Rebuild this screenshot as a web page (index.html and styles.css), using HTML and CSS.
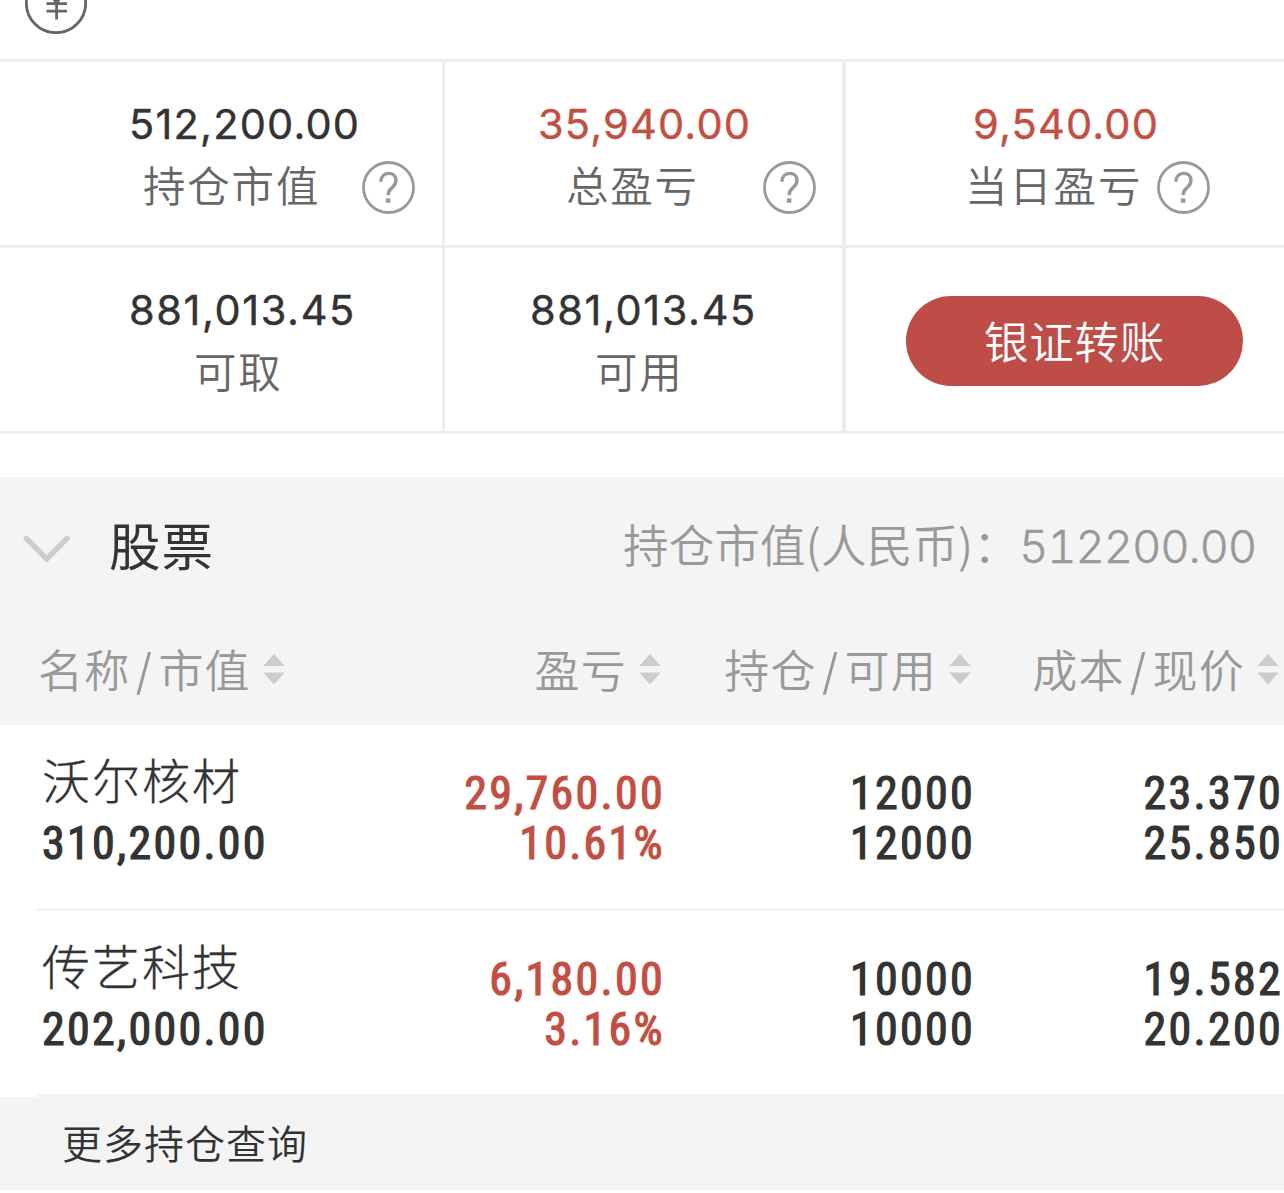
FILE: index.html
```html
<!DOCTYPE html>
<html lang="zh-CN">
<head>
<meta charset="utf-8">
<title>持仓</title>
<link rel="stylesheet" href="styles.css">
</head>
<body>
<svg class="defs" width="0" height="0" aria-hidden="true">
  <symbol id="help" viewBox="0 0 53 53">
    <circle cx="26.5" cy="26.5" r="25" fill="none" stroke="#999" stroke-width="2.8"/>
    <path d="M18.9 20.8C19 15.4 22.2 12.4 26.5 12.4C31 12.4 34 15.2 34 19.4C34 22.6 32.4 24.4 30.2 26.4C27.6 28.7 26.2 30 26.2 34" fill="none" stroke="#999" stroke-width="3.4"/>
    <path d="M23.8 37.4h4.6v4.4h-4.6z" fill="#999"/>
  </symbol>
  <symbol id="sort" viewBox="0 0 22 31">
    <path d="M11 0L21.7 12H.3zM.3 18.4H21.7L11 30.6z" fill="#ccc"/>
  </symbol>
</svg>
<header class="top">
  <svg class="yen" width="62" height="34" viewBox="0 0 62 34">
    <circle cx="31" cy="3" r="29.7" fill="none" stroke="#666" stroke-width="2.8"/>
    <path d="M31.6 0V19.5M21.5 3.6H42M21.5 11.2H42M22.5 -10L31.6 3L40.5 -10" fill="none" stroke="#666" stroke-width="2.8"/>
  </svg>
</header>
<main>
  <section class="summary">
    <div class="cell c1">
      <div class="num">512,200.00</div>
      <div class="label-row"><span class="label">持仓市值</span><svg class="help"><use href="#help"/></svg></div>
    </div>
    <div class="cell c2">
      <div class="num red">35,940.00</div>
      <div class="label-row"><span class="label">总盈亏</span><svg class="help"><use href="#help"/></svg></div>
    </div>
    <div class="cell c3">
      <div class="num red">9,540.00</div>
      <div class="label-row"><span class="label">当日盈亏</span><svg class="help"><use href="#help"/></svg></div>
    </div>
    <div class="cell c4">
      <div class="num">881,013.45</div>
      <div class="label-row"><span class="label">可取</span></div>
    </div>
    <div class="cell c5">
      <div class="num">881,013.45</div>
      <div class="label-row"><span class="label">可用</span></div>
    </div>
    <div class="cell c6"><button class="transfer">银证转账</button></div>
  </section>

  <section class="holdings">
    <div class="title-bar">
      <svg class="chevron" width="48" height="28" viewBox="0 0 48 28"><path d="M3.2 3.4L23.7 24L44 3.4" fill="none" stroke="#ccc" stroke-width="5.4" stroke-linecap="round"/></svg>
      <h2 class="title">股票</h2>
      <div class="total">持仓市值(人民币)：<span class="total-num">512200.00</span></div>
    </div>
    <div class="grid head">
      <div class="th">名称<i class="slash">/</i>市值<svg class="sort"><use href="#sort"/></svg></div>
      <div class="th">盈亏<svg class="sort"><use href="#sort"/></svg></div>
      <div class="th">持仓<i class="slash">/</i>可用<svg class="sort"><use href="#sort"/></svg></div>
      <div class="th">成本<i class="slash">/</i>现价<svg class="sort"><use href="#sort"/></svg></div>
    </div>
    <div class="grid row">
      <div class="td"><div class="name">沃尔核材</div><div>310,200.00</div></div>
      <div class="td red"><div>29,760.00</div><div>10.61%</div></div>
      <div class="td"><div>12000</div><div>12000</div></div>
      <div class="td"><div>23.370</div><div>25.850</div></div>
    </div>
    <div class="grid row">
      <div class="td"><div class="name">传艺科技</div><div>202,000.00</div></div>
      <div class="td red"><div>6,180.00</div><div>3.16%</div></div>
      <div class="td"><div>10000</div><div>10000</div></div>
      <div class="td"><div>19.582</div><div>20.200</div></div>
    </div>
  </section>
</main>
<footer class="more">更多持仓查询</footer>
</body>
</html>
```
FILE: styles.css
```css
* { box-sizing: border-box; }
body {
  margin: 0;
  width: 1284px;
  height: 1193px;
  overflow: hidden;
  background: #fff;
  color: #333;
  font-family: "Noto Sans CJK SC", sans-serif;
}
svg { display: block; flex: none; }
.defs { position: absolute; }
.top { height: 59px; padding-left: 25px; }

.summary {
  display: grid;
  grid-template-columns: 442px 397px 439px;
  grid-template-rows: 183px 183px;
  gap: 3px;
  border-top: 3px solid #ededed;
  border-bottom: 3px solid #ededed;
  background: #ededed;
}
.cell { background: #fff; padding-top: 38px; }
.c3, .c6 { margin-left: 1px; margin-right: -1px; }
.num {
  font: 400 41.5px/48px Inter, sans-serif;
  letter-spacing: 1.2px;
  -webkit-text-stroke: 0.4px currentColor;
  white-space: nowrap;
}
.red { color: #c34f42; }
.label-row { display: flex; margin-top: 13px; height: 53px; }
.label {
  font-size: 42.5px;
  line-height: 45px;
  letter-spacing: 1.8px;
  color: #666;
  font-weight: 350;
  white-space: nowrap;
}
.help { width: 53px; height: 53px; margin-left: auto; }
.c1 .num, .c4 .num { padding-left: 129px; }
.c4 .num, .c5 .num { letter-spacing: 1.6px; }
.c1 .label { margin-left: 143px; }
.c1 .help { margin-right: 27px; }
.c2 .help { margin-right: 26px; }
.c2 .num { padding-left: 93px; }
.c2 .label { margin-left: 121px; }
.c3 .num { padding-left: 127px; }
.c3 .label { margin-left: 119px; }
.c3 .help { margin-left: 15px; }
.c4 .label { margin-left: 194px; }
.c5 .num { padding-left: 85px; }
.c5 .label { margin-left: 150px; }
.c6 { padding: 48px 0 0 60px; }
.transfer {
  display: block;
  width: 337px;
  height: 90px;
  padding: 0 0 3px;
  border: 0;
  border-radius: 45px;
  background: #bd4d46;
  color: #fff;
  font: 350 44.5px/84px "Noto Sans CJK SC", sans-serif;
  letter-spacing: 0.8px;
}

.title-bar {
  display: flex;
  align-items: center;
  height: 140px;
  margin-top: 43px;
  padding: 0 28px 0 23px;
  background: #f4f4f4;
}
.chevron { margin-top: 3px; }
.title {
  margin: 0 0 7px 38px;
  font-size: 51.5px;
  font-weight: 400;
  line-height: 60px;
  letter-spacing: 1px;
}
.total {
  margin-left: auto;
  margin-bottom: 5px;
  color: #999;
  font-size: 45.5px;
  font-weight: 350;
  line-height: 60px;
  letter-spacing: 0.2px;
  white-space: nowrap;
}
.total-num {
  font-family: Inter, sans-serif;
  font-feature-settings: "tnum";
  letter-spacing: -1.2px;
  -webkit-text-stroke: 0.4px currentColor;
}

.grid {
  display: grid;
  grid-template-columns: 370px 293px 310px 308px;
}
.head { height: 108px; background: #f4f4f4; }
.th {
  display: flex;
  justify-content: flex-end;
  padding: 20px 2px 0 0;
  color: #999;
  font-size: 45px;
  font-weight: 350;
  line-height: 63px;
  letter-spacing: 1.2px;
  white-space: nowrap;
}
.th:first-child { justify-content: flex-start; padding-left: 38px; }
.slash {
  width: 28px;
  padding-top: 3px;
  text-align: center;
  font-family: Inter, sans-serif;
  font-size: 49px;
  font-style: normal;
}
.sort { width: 22px; height: 31px; margin: 17px 0 0 12px; }

.row {
  height: 186px;
  border-bottom: 3px solid;
  border-image: linear-gradient(90deg, transparent 37px, #f4f4f4 37px) 3 0 3 0;
  font: 400 46px/50px Roboto, sans-serif;
  font-stretch: 75%;
  letter-spacing: 2.3px;
  -webkit-text-stroke: 1.2px currentColor;
}
.td { padding-top: 43px; margin-right: -2px; text-align: right; }
.td:first-child { padding: 28px 0 0 42px; text-align: left; }
.name {
  height: 65px;
  font: 300 48px/50px "Noto Sans CJK SC", sans-serif;
  letter-spacing: 2px;
  -webkit-text-stroke: 0.3px currentColor;
}
.more {
  height: 93px;
  padding-left: 62px;
  background: #f4f4f4;
  font-size: 40px;
  font-weight: 350;
  line-height: 91px;
  letter-spacing: 1px;
}
```
